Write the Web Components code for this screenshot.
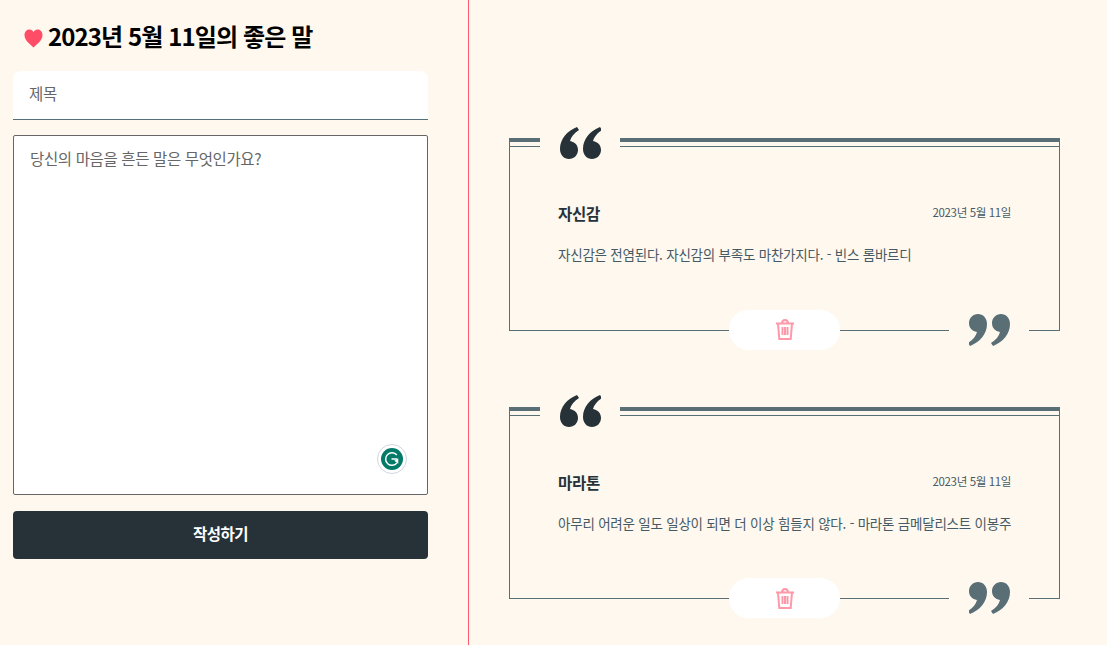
<!DOCTYPE html>
<html lang="ko">
<head>
<meta charset="utf-8">
<title>좋은 말</title>
<style>
  html, body { margin: 0; height: 100%; overflow: hidden; }
  body { background: #fff8ef; font-family: "Noto Sans CJK KR", "Noto Sans", sans-serif; color: #263238; }
</style>
</head>
<body>
<quote-app>
  <quote-form slot="left" heading="2023년 5월 11일의 좋은 말"></quote-form>
  <quote-card slot="right" title="자신감" date="2023년 5월 11일">자신감은 전염된다. 자신감의 부족도 마찬가지다. - 빈스 롬바르디</quote-card>
  <quote-card slot="right" title="마라톤" date="2023년 5월 11일">아무리 어려운 일도 일상이 되면 더 이상 힘들지 않다. - 마라톤 금메달리스트 이봉주</quote-card>
</quote-app>

<script>
const QUOTE_PATH = 'M17 0C7 4 0 12 0 22c0 6 4 10 9 10s9-4 9-9-3-8-8-9c1-4 4-8 9-11zM40 0C30 4 23 12 23 22c0 6 4 10 9 10s9-4 9-9-3-8-8-9c1-4 4-8 9-11z';

class QuoteApp extends HTMLElement {
  constructor() {
    super();
    this.attachShadow({ mode: 'open' });
    this.shadowRoot.innerHTML = `
      <style>
        :host { display: grid; grid-template-columns: 469px minmax(0, 1fr); height: 645px; }
        .left { border-right: 1px solid #ff5a6e; }
        .right { display: flex; flex-direction: column; gap: 44.750px; padding: 126px 47px 0 40px; min-width: 0; }
      </style>
      <div class="left"><slot name="left"></slot></div>
      <div class="right"><slot name="right"></slot></div>
    `;
  }
}

class QuoteForm extends HTMLElement {
  constructor() {
    super();
    this.attachShadow({ mode: 'open' });
    this.shadowRoot.innerHTML = `
      <style>
        :host { display: block; padding: 18px 40px 0 13px; }
        h1 { display: flex; align-items: center; gap: 5px; height: 35px; margin: 0 0 18px 11px; font-size: 24px; font-weight: 700; color: #000; letter-spacing: -0.9px; }
        svg.heart { width: 19px; height: 19px; margin-top: 5px; }
        input, textarea { display: block; width: 100%; box-sizing: border-box; outline: 0; font: inherit; font-size: 15.500px; letter-spacing: -0.370px; color: #263238; background: #fff; }
        input::placeholder, textarea::placeholder { color: #666; opacity: 1; }
        input { height: 49px; padding: 0 16px 4px; border: 0; border-bottom: 1px solid #546e7a; border-radius: 8px 8px 0 0; margin-bottom: 15px; }
        .area { position: relative; margin-bottom: 16px; }
        textarea { height: 360px; padding: 11px 16px; border: 1px solid #666; border-radius: 2px; resize: none; }
        .grammarly { position: absolute; right: 21px; bottom: 21px; width: 30px; height: 30px; }
        button { display: block; width: 100%; height: 48px; padding: 0 0 5px; border: 0; border-radius: 4px; background: #263238; color: #fff; font: inherit; font-size: 15.500px; font-weight: 700; letter-spacing: -0.500px; }
      </style>
      <h1>
        <svg class="heart" viewBox="0 0 19 19"><path fill="#ff4d67" d="M9.500 18.500C6 15 .5 11.500.5 6 .5 2.500 3 .5 5.500.5c1.800 0 3.200 1 4 2.800.8-1.800 2.200-2.800 4-2.800 2.500 0 5 2 5 5.500 0 5.500-5.500 9-9 12.500z"/></svg>
        <span id="heading"></span>
      </h1>
      <input type="text" placeholder="제목">
      <div class="area">
        <textarea placeholder="당신의 마음을 흔든 말은 무엇인가요?"></textarea>
        <svg class="grammarly" viewBox="0 0 30 30">
          <circle cx="15" cy="15" r="14.500" fill="#fff" stroke="#cfd6e0"/>
          <circle cx="15" cy="15" r="11" fill="#047a68"/>
          <path fill="none" stroke="#fff" stroke-width="1.500" d="M19.800 11A6.300 6.300 0 1 0 19.900 19M14.500 15H20.500"/>
          <path fill="#fff" d="M21.300 14.600v5.200l-4-3z"/>
        </svg>
      </div>
      <button type="button">작성하기</button>
    `;
    this.shadowRoot.getElementById('heading').textContent = this.getAttribute('heading');
  }
}

class QuoteCard extends HTMLElement {
  constructor() {
    super();
    this.attachShadow({ mode: 'open' });
    this.shadowRoot.innerHTML = `
      <style>
        :host { display: block; color: #263238; }
        .top { display: flex; align-items: center; height: 33px; }
        .double { box-sizing: border-box; height: 9px; border-top: 4px solid #5a6e75; border-bottom: 1px solid #5a6e75; }
        .first { width: 31px; }
        .rest { flex: 1; }
        .slot-open { width: 80px; display: flex; justify-content: center; }
        svg.quote { width: 41px; height: 32px; display: block; }
        .open { fill: #263238; }
        .close { fill: #5a6e75; transform: rotate(180deg); }
        .body { box-sizing: border-box; height: 188.750px; margin-top: -17px; padding: 59px 48px 0; border-left: 1px solid #5a6e75; border-right: 1px solid #5a6e75; border-bottom: 1px solid #5a6e75; }
        .head { display: flex; justify-content: space-between; align-items: flex-start; margin-bottom: 19px; }
        h2 { margin: 0; font-size: 15.500px; letter-spacing: -0.200px; line-height: 24px; font-weight: 700; }
        time { margin-top: 1px; font-size: 11.500px; letter-spacing: -0.370px; line-height: 20px; color: #455a64; }
        p { margin: 0; font-size: 13.500px; letter-spacing: -0.225px; line-height: 20px; color: #455a64; white-space: nowrap; }
        .bottom { display: flex; align-items: center; height: 40px; margin-top: -21px; padding-left: 220px; }
        .pill { width: 111px; height: 40px; border-radius: 20px; background: #fff; display: flex; align-items: center; justify-content: center; }
        svg.trash { width: 20px; height: 21px; display: block; }
        .slot-close { width: 80px; height: 40px; margin-left: 109px; background: #fff8ef; display: flex; align-items: center; justify-content: center; }
      </style>
      <div class="top">
        <div class="double first"></div>
        <div class="slot-open"><svg class="quote open" viewBox="0 0 41 32"><path d="${QUOTE_PATH}"/></svg></div>
        <div class="double rest"></div>
      </div>
      <div class="body">
        <div class="head"><h2 id="title"></h2><time id="date"></time></div>
        <p><slot></slot></p>
      </div>
      <div class="bottom">
        <div class="pill">
          <svg class="trash" viewBox="0 0 20 21" fill="none" stroke="#ff98a8" stroke-width="2">
            <path d="M1 4.500h18M7 4.500C7 2 8.500 1 10 1s3 1 3 3.500M3 4.500L4.300 20h11.400L17 4.500M7.500 8v8M10 8v8M12.500 8v8"/>
          </svg>
        </div>
        <div class="slot-close"><svg class="quote close" viewBox="0 0 41 32"><path d="${QUOTE_PATH}"/></svg></div>
      </div>
    `;
    this.shadowRoot.getElementById('title').textContent = this.getAttribute('title');
    this.shadowRoot.getElementById('date').textContent = this.getAttribute('date');
  }
}

customElements.define('quote-app', QuoteApp);
customElements.define('quote-form', QuoteForm);
customElements.define('quote-card', QuoteCard);
</script>
</body>
</html>
